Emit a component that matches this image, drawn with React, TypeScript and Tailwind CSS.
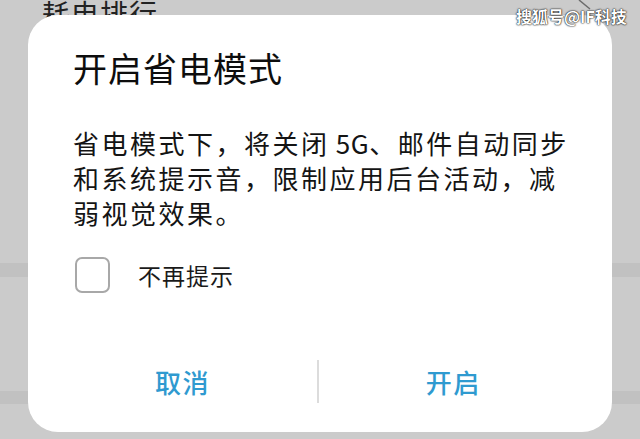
import React from "react";

const cjk = { fontFamily: '"Noto Sans CJK SC", "Noto Sans", sans-serif' };

export default function App() {
  return (
    <div
      className="relative w-[640px] h-[439px] overflow-hidden bg-[#cbcbcb]"
      style={cjk}
    >
      {/* background page content */}
      <div className="flex flex-col">
        <div className="pl-[42px] h-[28px] text-[28px] leading-[26px] tracking-[1px] text-[#222]">
          耗电排行
        </div>
        <div className="mt-[235px] h-[14px] bg-[#c1c1c1]" />
        <div className="mt-[114px] h-[13px] bg-[#c1c1c1]" />
      </div>

      {/* small diagonal stroke near watermark */}
      <svg className="absolute left-[578px] top-0" width="14" height="10" viewBox="0 0 14 10">
        <line x1="1" y1="0" x2="12" y2="9" stroke="#6b6b6b" strokeWidth="1.5" />
      </svg>

      {/* dialog */}
      <div className="absolute left-[28px] top-[15px] w-[584px] h-[417px] rounded-[30px] bg-white flex flex-col">
        <div className="pl-[45px] pt-[33px] text-[34px] leading-[40px] tracking-[1px] text-[#0d0d0d]">
          开启省电模式
        </div>
        <div className="pl-[45px] mt-[37px] text-[26px] leading-[35px] tracking-[2.5px] text-[#141414]">
          省电模式下，将关闭<span className="tracking-[0.5px]"> 5G</span>、邮件自动同步
          <br />
          和系统提示音，限制应用后台活动，减
          <br />
          弱视觉效果。
        </div>
        <div className="pl-[47px] mt-[27px] flex items-center gap-[28px]">
          <div className="w-[35px] h-[36px] rounded-[7px] border-2 border-[#a8a8a8] bg-white" />
          <div className="text-[23px] leading-[30px] tracking-[1px] text-[#1a1a1a]">不再提示</div>
        </div>
        <div className="mt-auto mb-[29px] flex items-stretch h-[43px]">
          <div className="flex-1 flex items-center justify-center pl-[20px] text-[26px] font-medium tracking-[1.5px] text-[#2f9ad0]">
            取消
          </div>
          <div className="w-[1.5px] bg-[#dcdcdc]" />
          <div className="flex-1 flex items-center justify-center pr-[24px] text-[26px] font-medium tracking-[1.5px] text-[#2f9ad0]">
            开启
          </div>
        </div>
      </div>

      {/* watermark */}
      <div className="absolute left-[516px] top-[5px] text-[16px] leading-[22px] font-bold text-white [text-shadow:0_0_2px_#000,0_0_1px_#000]">
        搜狐号@IF科技
      </div>
    </div>
  );
}
